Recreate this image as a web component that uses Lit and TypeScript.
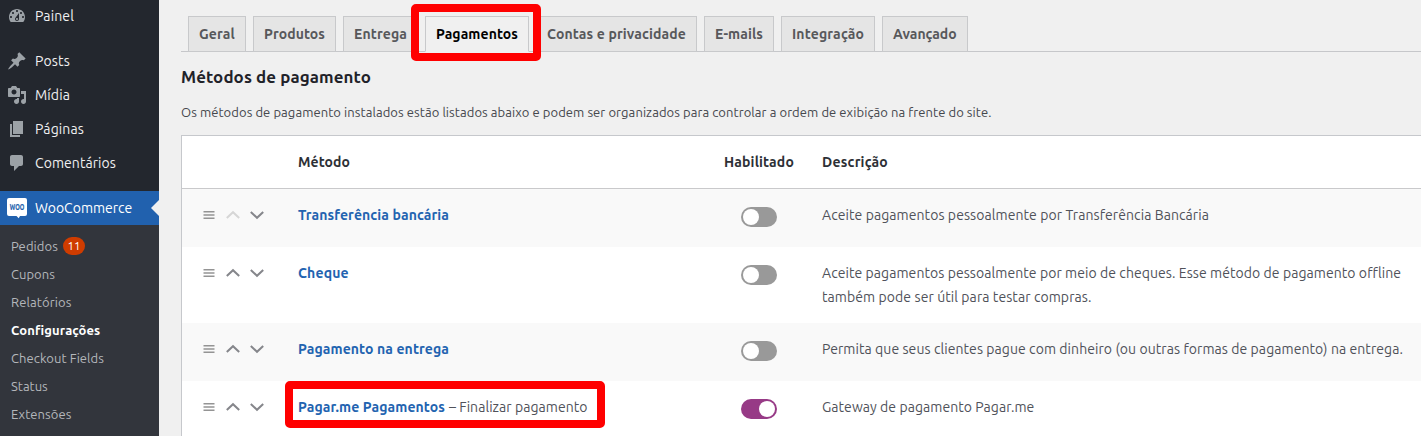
import { LitElement, html, css, nothing } from "lit";
import { customElement, property } from "lit/decorators.js";
import { classMap } from "lit/directives/class-map.js";

/** Text whose tracking is adjusted when its advance differs from the given width. */
@customElement("fit-text")
class FitText extends LitElement {
  @property() text = "";
  @property({ type: Number }) width = 0;
  static styles = css`
    :host { display: inline-block; white-space: nowrap; }
    .run { display: inline-block; white-space: nowrap; }
  `;
  firstUpdated() {
    const run = this.renderRoot.querySelector(".run") as HTMLElement;
    const diff = this.width - run.getBoundingClientRect().width;
    if (Math.abs(diff) > 0.4) run.style.letterSpacing = diff / this.text.length + "px";
    this.style.width = this.width + "px";
  }
  render() {
    return html`<span class="run">${this.text}</span>`;
  }
}

const t = (text: string, width: number) => html`<fit-text .text=${text} .width=${width}></fit-text>`;

const icons: Record<string, string> = {
  dashboard: "M3.76 16h12.48c1.1-1.37 1.76-3.11 1.76-5 0-4.42-3.58-8-8-8s-8 3.58-8 8c0 1.89.66 3.63 1.76 5zM10 4c.55 0 1 .45 1 1s-.45 1-1 1-1-.45-1-1 .45-1 1-1zM6 6c.55 0 1 .45 1 1s-.45 1-1 1-1-.45-1-1 .45-1 1-1zm8 0c.55 0 1 .45 1 1s-.45 1-1 1-1-.45-1-1 .45-1 1-1zm-5.37 5.55L12 7v6c0 1.1-.9 2-2 2s-2-.9-2-2c0-.57.24-1.08.63-1.45zM4 10c.55 0 1 .45 1 1s-.45 1-1 1-1-.45-1-1 .45-1 1-1zm12 0c.55 0 1 .45 1 1s-.45 1-1 1-1-.45-1-1 .45-1 1-1zm-5 3c0-.55-.45-1-1-1s-1 .45-1 1 .45 1 1 1 1-.45 1-1z",
  pin: "M10.44 3.02l1.82-1.82 6.36 6.35-1.83 1.82c-1.05-.68-2.48-.57-3.41.36l-.75.75c-.92.93-1.04 2.35-.35 3.41l-1.83 1.82-2.41-2.41-2.8 2.79c-.42.42-3.38 2.71-3.8 2.29s1.86-3.39 2.28-3.81l2.79-2.79L4.1 9.36l1.83-1.82c1.05.69 2.48.57 3.4-.36l.75-.75c.93-.92 1.05-2.35.36-3.41z",
  media: "M13 11V4c0-.55-.45-1-1-1h-1.67L9 1H5L3.67 3H2c-.55 0-1 .45-1 1v7c0 .55.45 1 1 1h10c.55 0 1-.45 1-1zM7 4.5c1.38 0 2.5 1.12 2.5 2.5S8.38 9.5 7 9.5 4.5 8.38 4.5 7 5.62 4.5 7 4.5zM14 6h5v10.5c0 1.38-1.12 2.5-2.5 2.5S14 17.88 14 16.5s1.12-2.5 2.5-2.5c.17 0 .34.02.5.05V9h-3V6zm-4 8.05V13h2v3.5c0 1.38-1.12 2.5-2.5 2.5S7 17.88 7 16.5 8.12 14 9.5 14c.17 0 .34.02.5.05z",
  page: "M6 15V2h10v13H6zm-1 1h8v2H3V5h2v11z",
  comment: "M5 2h9c1.1 0 2 .9 2 2v7c0 1.1-.9 2-2 2h-2l-5 5v-5H5c-1.1 0-2-.9-2-2V4c0-1.1.9-2 2-2z",
};

@customElement("admin-menu")
class AdminMenu extends LitElement {
  static styles = css`
    :host { display: flex; flex-direction: column; width: 159px; flex: none; height: 436px; background: #23272e; color: #f0f0f1; overflow: hidden; }
    .group { display: flex; flex-direction: column; margin-bottom: 11px; }
    .first { margin-top: -1px; }
    .item { display: flex; align-items: center; height: 34px; padding-left: 7px; gap: 8px; font-size: 14px; line-height: 34px; box-sizing: border-box; }
    .icon { width: 20px; height: 20px; display: block; fill: #9ca2a7; flex: none; }
    .brand { overflow: visible; }
    .current { background: #2161ae; color: #fff; position: relative; }
    .notch { position: absolute; right: 0; top: 9px; width: 8px; height: 16px; background: #f0f0f0; clip-path: polygon(100% 0, 100% 100%, 0 50%); }
    .logo { fill: #fff; }
    .woo { fill: #2161ae; stroke: #2161ae; stroke-width: .2; font-weight: 700; font-size: 8.4px; }
    .sub { flex: 1; background: #32353c; padding-top: 7px; color: #b4b7bb; font-size: 13px; }
    .link { display: flex; align-items: center; height: 28px; line-height: 28px; padding-left: 11px; gap: 5px; }
    .active { color: #fff; font-weight: 700; }
    .badge { width: 22px; height: 18px; border-radius: 9px; background: #cf3c00; color: #fff; font-size: 11.5px; line-height: 17px; text-align: center; }
  `;
  item(icon: string, label: string, w: number) {
    return html`<div class="item"><svg class="icon" viewBox="0 0 20 20"><path fill-rule="evenodd" d=${icons[icon]}></path></svg>${t(label, w)}</div>`;
  }
  link(label: string, w: number, active = false, badge = "") {
    return html`<div class=${classMap({ link: true, active })}>${t(label, w)}${badge ? html`<span class="badge">${badge}</span>` : nothing}</div>`;
  }
  render() {
    return html`
      <div class="group first">${this.item("dashboard", "Painel", 39)}</div>
      <div class="group">
        ${this.item("pin", "Posts", 35)} ${this.item("media", "Mídia", 35)}
        ${this.item("page", "Páginas", 49)} ${this.item("comment", "Comentários", 81)}
      </div>
      <div class="item current">
        <svg class="icon brand" viewBox="0 0 20 20">
          <path class="logo" d="M2 0h16a2 2 0 0 1 2 2v14a2 2 0 0 1-2 2h-5l-1.300 2.200L9.500 18H2a2 2 0 0 1-2-2V2a2 2 0 0 1 2-2z"></path>
          <text class="woo" x="2.800" y="12" textLength="14.500" lengthAdjust="spacingAndGlyphs">WOO</text>
        </svg>
        ${t("WooCommerce", 97.5)}
        <span class="notch"></span>
      </div>
      <div class="sub">
        ${this.link("Pedidos", 47, false, "11")} ${this.link("Cupons", 44)} ${this.link("Relatórios", 60.5)}
        ${this.link("Configurações", 89, true)} ${this.link("Checkout Fields", 93)} ${this.link("Status", 37)} ${this.link("Extensões", 60.5)}
      </div>`;
  }
}

interface Method { name: string; w: number; suffix?: string; first?: boolean; on?: boolean; desc: [string, number][]; }

const methods: Method[] = [
  { name: "Transferência bancária", w: 151, first: true, desc: [["Aceite pagamentos pessoalmente por Transferência Bancária", 387]] },
  { name: "Cheque", w: 50.7, desc: [["Aceite pagamentos pessoalmente por meio de cheques. Esse método de pagamento offline", 579], ["também pode ser útil para testar compras.", 269.5]] },
  { name: "Pagamento na entrega", w: 151, desc: [["Permita que seus clientes pague com dinheiro (ou outras formas de pagamento) na entrega.", 581]] },
  { name: "Pagar.me Pagamentos", w: 147, suffix: "– Finalizar pagamento", on: true, desc: [["Gateway de pagamento Pagar.me", 212.3]] },
];

@customElement("payment-table")
class PaymentTable extends LitElement {
  static styles = css`
    :host { display: block; border: 1px solid #c6c8cc; border-right: 0; background: #fff; font-size: 14px; line-height: 24px; color: #50525a; }
    .row { display: grid; grid-template-columns: 116px 414px 110px 1fr; box-sizing: border-box; min-height: 58px; padding: 14px 0; align-items: start; }
    .head { min-height: 53px; border-bottom: 1px solid #c9c9cb; font-weight: 700; color: #2d3036; }
    .odd { background: #f9f9f9; }
    .sort { display: flex; align-items: center; gap: 10px; height: 24px; padding-left: 20px; }
    .glyph { width: 14px; height: 14px; display: block; fill: none; stroke: #85868b; stroke-width: 2; }
    .bars { stroke: #949494; stroke-width: 1.4; }
    .off { stroke: #d6d6d6; }
    .name { font-weight: 700; color: #2263b0; }
    .method { white-space: nowrap; display: flex; gap: 4px; }
    .center { padding-left: 12px; }
    .toggle { display: block; box-sizing: border-box; width: 36px; height: 20px; margin: 4px 0 0 29px; padding: 2px; border-radius: 10px; background: #999; }
    .knob { display: block; width: 16px; height: 16px; border-radius: 50%; background: #fff; }
    .on { background: #973a86; padding-left: 18px; }
    .desc { display: flex; flex-direction: column; }
  `;
  render() {
    return html`
      <div class="row head"><span></span>${t("Método", 52)}<span class="center">${t("Habilitado", 70)}</span><span>${t("Descrição", 66)}</span></div>
      ${methods.map((m, i) => html`
        <div class=${classMap({ row: true, odd: i % 2 === 0 })}>
          <div class="sort">
            <svg class="glyph bars" viewBox="0 0 14 14"><path d="M1.500 3.700h11M1.500 7h11M1.500 10.300h11"></path></svg>
            <svg class=${classMap({ glyph: true, off: !!m.first })} viewBox="0 0 14 14"><path d="M.8 10 7 4.200 13.200 10"></path></svg>
            <svg class="glyph" viewBox="0 0 14 14"><path d="M.8 4 7 9.800 13.200 4"></path></svg>
          </div>
          <div class="method"><span class="name">${t(m.name, m.w)}</span>${m.suffix ? t(m.suffix, 138.5) : nothing}</div>
          <div><span class=${classMap({ toggle: true, on: !!m.on })}><span class="knob"></span></span></div>
          <div class="desc">${m.desc.map(([s, w]) => t(s, w))}</div>
        </div>`)}`;
  }
}

@customElement("app-root")
class AppRoot extends LitElement {
  static styles = css`
    :host { display: flex; position: relative; width: 1421px; height: 436px; overflow: hidden; background: #f0f0f0; font-family: "Ubuntu", "Noto Sans", sans-serif; }
    .content { flex: 1; min-width: 0; padding: 16px 0 0 22px; }
    .tabs { display: flex; gap: 7px; padding-left: 7px; height: 35px; border-bottom: 1px solid #c6c7ca; }
    .tab { box-sizing: border-box; height: 36px; padding: 0 10px; border: 1px solid #c8c9cb; background: #e5e5e5; color: #57585b; font-size: 14px; font-weight: 700; line-height: 34px; }
    .selected { background: #f0f0f0; border-bottom-color: #f0f0f0; color: #000; }
    .title { margin: 13px 0 0; font-size: 16.900px; line-height: 24px; font-weight: 700; color: #1f2229; }
    .intro { margin: 13px 0 12px; font-size: 13px; line-height: 21px; color: #45474d; height: 21px; }
    .mark { position: absolute; box-sizing: border-box; border: 8px solid #f00; border-radius: 5px; }
    .mark-tab { left: 411px; top: 4px; width: 130px; height: 57px; }
    .mark-row { left: 285px; top: 381px; width: 320px; height: 47px; }
  `;
  render() {
    const tabs: [string, number][] = [["Geral", 36], ["Produtos", 61], ["Entrega", 53], ["Pagamentos", 82], ["Contas e privacidade", 139], ["E-mails", 48], ["Integração", 72], ["Avançado", 64]];
    return html`
      <admin-menu></admin-menu>
      <main class="content">
        <nav class="tabs">${tabs.map(([s, w]) => html`<span class=${classMap({ tab: true, selected: s === "Pagamentos" })}>${t(s, w)}</span>`)}</nav>
        <h2 class="title">${t("Métodos de pagamento", 190)}</h2>
        <p class="intro">${t("Os métodos de pagamento instalados estão listados abaixo e podem ser organizados para controlar a ordem de exibição na frente do site.", 810.5)}</p>
        <payment-table></payment-table>
      </main>
      <div class="mark mark-tab"></div>
      <div class="mark mark-row"></div>`;
  }
}
